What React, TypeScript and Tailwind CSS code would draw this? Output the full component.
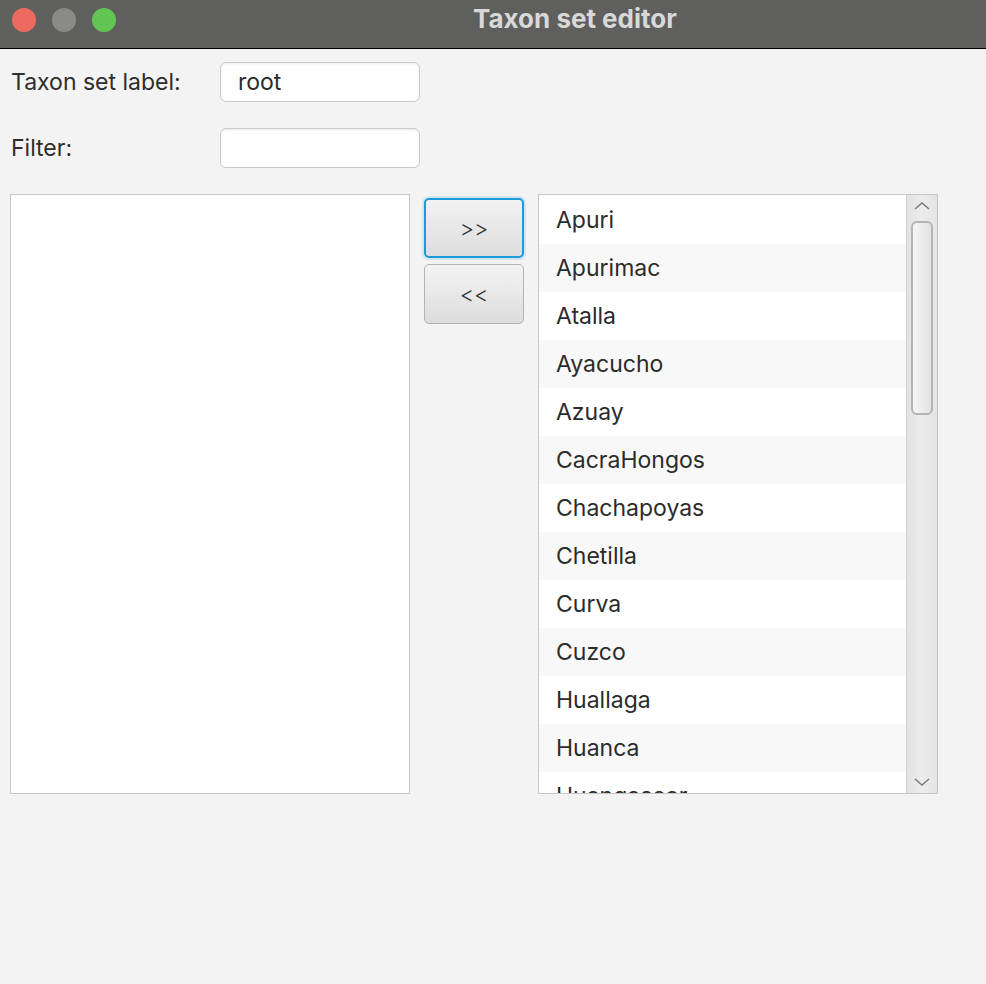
import React from 'react';

const taxa = [
	'Apuri',
	'Apurimac',
	'Atalla',
	'Ayacucho',
	'Azuay',
	'CacraHongos',
	'Chachapoyas',
	'Chetilla',
	'Curva',
	'Cuzco',
	'Huallaga',
	'Huanca',
	'Huangascar',
];

const font = { fontFamily: 'Inter, "Noto Sans", sans-serif' };

function TextField({ value }: { value?: string }) {
	return (
		<div className="flex h-[40px] w-[200px] items-center rounded-[6px] border border-[#c9c9c9] bg-white pl-[17px] text-[23px] text-[#2b2b2b] shadow-[inset_0_1px_2px_rgba(0,0,0,0.08)]">
			{value}
		</div>
	);
}

export default function App() {
	return (
		<div className="h-[984px] w-[986px] overflow-hidden bg-[#f3f3f3]" style={font}>
			{/* title bar */}
			<div className="relative flex h-[49px] items-start border-b border-black bg-[#5f5f5d]">
				<div className="flex gap-[16px] pl-[12px] pt-[8px]">
					<span className="h-[24px] w-[24px] rounded-full bg-[#ec6a5e]" />
					<span className="h-[24px] w-[24px] rounded-full bg-[#8a8a89]" />
					<span className="h-[24px] w-[24px] rounded-full bg-[#61c554]" />
				</div>
				<div className="ml-[357px] pt-[3px] text-[26px] font-bold leading-[32px] text-[#d8d8d8]">
					Taxon set editor
				</div>
			</div>

			<div className="px-[10px] pt-[13px]">
				<div className="flex h-[40px] items-center">
					<div className="w-[210px] pl-[1px] text-[23px] text-[#2e2e2e]">Taxon set label:</div>
					<TextField value="root" />
				</div>
				<div className="mt-[26px] flex h-[40px] items-center">
					<div className="w-[210px] pl-[1px] text-[23px] text-[#2e2e2e]">Filter:</div>
					<TextField />
				</div>

				<div className="mt-[26px] flex items-start">
					<div className="h-[600px] w-[400px] border border-[#c6c6c6] bg-white" />

					<div className="ml-[14px] mt-[4px] flex w-[100px] flex-col gap-[6px]">
						<button
							type="button"
							className="h-[60px] w-[100px] rounded-[5px] border-2 border-[#1a9bdc] bg-gradient-to-b from-[#f2f2f2] to-[#dddddd] text-[22px] font-light text-[#333] shadow-[0_0_0_2px_rgba(26,155,220,0.15)]"
						>
							&gt;&gt;
						</button>
						<button
							type="button"
							className="h-[60px] w-[100px] rounded-[5px] border border-[#b3b3b3] bg-gradient-to-b from-[#f4f4f4] to-[#dcdcdc] text-[22px] font-light text-[#333]"
						>
							&lt;&lt;
						</button>
					</div>

					<div className="ml-[14px] flex h-[600px] w-[400px] overflow-hidden border border-[#c6c6c6] bg-white">
						<div className="flex-1 overflow-hidden pt-[1px]">
							{taxa.map((t, i) => (
								<div
									key={t}
									className={`flex h-[48px] items-center pl-[17px] text-[23px] text-[#2b2b2b] ${
										i % 2 === 1 ? 'bg-[#f8f8f8]' : 'bg-white'
									}`}
								>
									{t}
								</div>
							))}
						</div>
						<div className="flex w-[31px] flex-col items-center border-l border-[#d0d0d0] bg-gradient-to-r from-[#e2e2e2] via-[#ececec] to-[#e4e4e4]">
							<svg width="16" height="10" viewBox="0 0 16 10" className="mt-[6px]">
								<path d="M1 8 L8 2 L15 8" fill="none" stroke="#7a7a7a" strokeWidth="1.5" />
							</svg>
							<div className="mt-[10px] h-[194px] w-[22px] rounded-[6px] border-2 border-[#b4b4b4] bg-gradient-to-r from-[#f6f6f6] to-[#e2e2e2]" />
							<div className="flex-1" />
							<svg width="16" height="10" viewBox="0 0 16 10" className="mb-[6px]">
								<path d="M1 2 L8 8 L15 2" fill="none" stroke="#7a7a7a" strokeWidth="1.5" />
							</svg>
						</div>
					</div>
				</div>
			</div>
		</div>
	);
}
